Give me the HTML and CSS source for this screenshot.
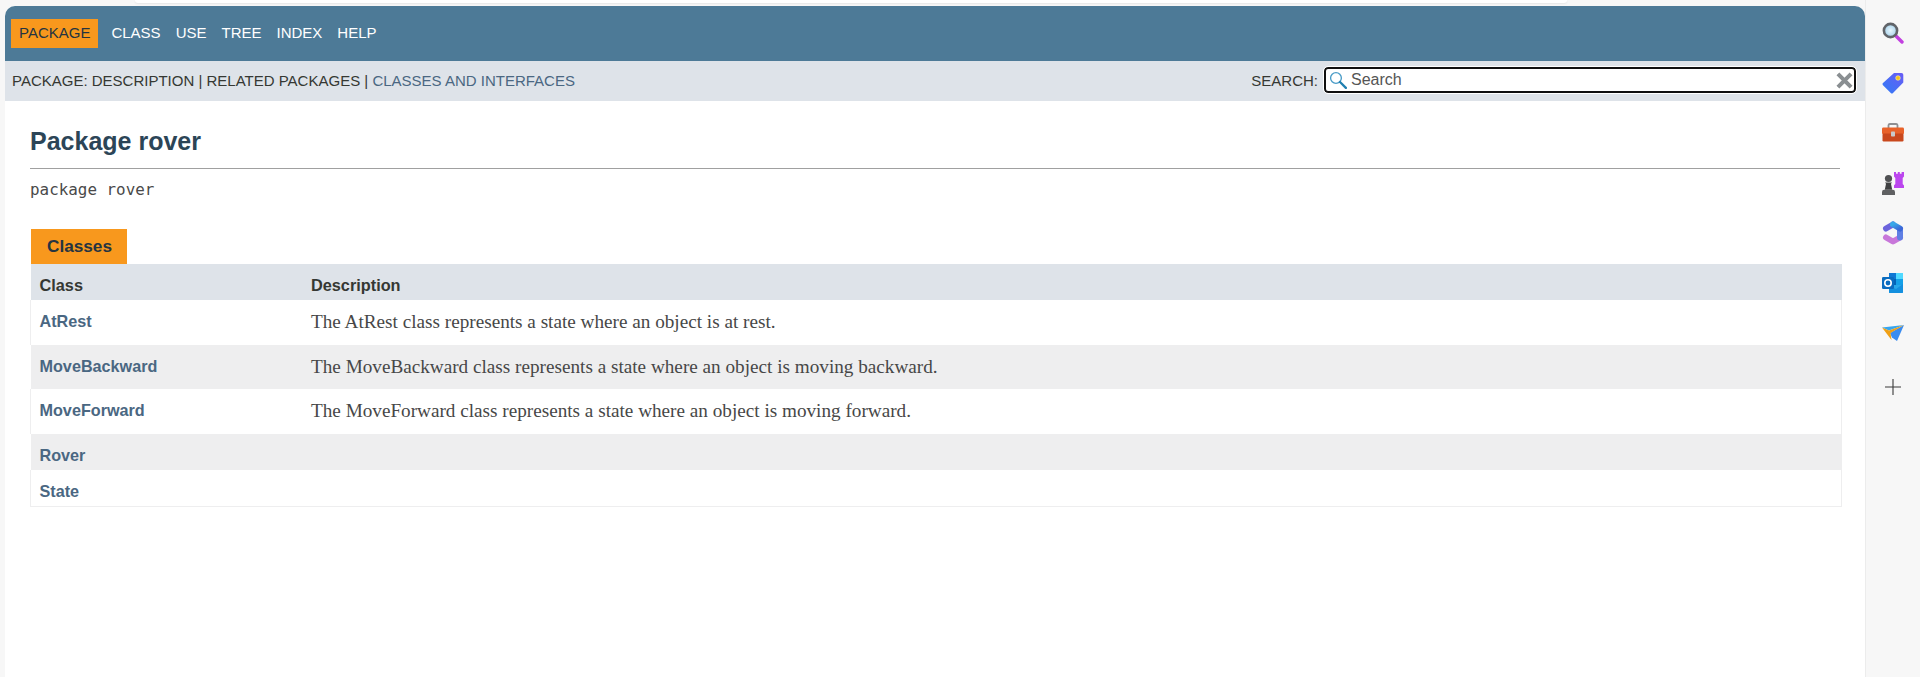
FILE: index.html
```html
<!DOCTYPE html>
<html lang="en">
<head>
<meta charset="utf-8">
<title>rover</title>
<link rel="stylesheet" href="styles.css">
</head>
<body>
<div class="topsliver"></div>
<div class="shell">
  <main class="panel">
    <header>
      <nav class="topnav">
        <a class="tab active">PACKAGE</a>
        <a class="tab">CLASS</a>
        <a class="tab">USE</a>
        <a class="tab">TREE</a>
        <a class="tab">INDEX</a>
        <a class="tab">HELP</a>
      </nav>
      <div class="subnav">
        <div class="crumbs">PACKAGE: DESCRIPTION | RELATED PACKAGES | <a class="crumb-link">CLASSES AND INTERFACES</a></div>
        <div class="search">
          <label class="search-label">SEARCH:</label>
          <div class="search-box">
            <svg class="glass" viewBox="0 0 16 16" width="18" height="18"><circle cx="6.200" cy="6.200" r="4.800" fill="none" stroke="#4a9cc7" stroke-width="1.200"/><path d="M9.800 9.800L15 15" stroke="#1f7fb0" stroke-width="2" stroke-linecap="round"/></svg>
            <span class="search-text">Search</span>
            <svg class="clear" viewBox="0 0 16 16" width="17" height="17"><path d="M1.800 1.800L14.200 14.200M14.200 1.800L1.800 14.200" stroke="#8a8f92" stroke-width="3.800"/></svg>
          </div>
        </div>
      </div>
    </header>
    <section class="content">
      <h1 class="title">Package rover</h1>
      <hr class="rule">
      <div class="sig">package rover</div>
      <div class="caption">Classes</div>
      <div class="table">
        <div class="row head"><div class="c1">Class</div><div class="c2">Description</div></div>
        <div class="row tall white"><a class="c1 link">AtRest</a><div class="c2 desc">The AtRest class represents a state where an object is at rest.</div></div>
        <div class="row tall grey"><a class="c1 link">MoveBackward</a><div class="c2 desc">The MoveBackward class represents a state where an object is moving backward.</div></div>
        <div class="row tall white"><a class="c1 link">MoveForward</a><div class="c2 desc">The MoveForward class represents a state where an object is moving forward.</div></div>
        <div class="row short grey"><a class="c1 link">Rover</a><div class="c2"></div></div>
        <div class="row short white last"><a class="c1 link">State</a><div class="c2"></div></div>
      </div>
    </section>
  </main>
  <aside class="sidebar">
    <div class="slot"><svg viewBox="0 0 22 22" width="22" height="22"><defs><radialGradient id="lens"><stop offset="0" stop-color="#e6f5fc"/><stop offset="1" stop-color="#a9d3ec"/></radialGradient></defs><path d="M13.500 13.500L20 20" stroke="#c23fe0" stroke-width="3.400" stroke-linecap="round"/><circle cx="8.500" cy="8.500" r="6.600" fill="url(#lens)" stroke="#616469" stroke-width="2.600"/></svg></div>
    <div class="slot"><svg viewBox="0 0 22 22" width="22" height="22"><defs><linearGradient id="tag" x1="0" y1="1" x2="1" y2="0"><stop offset="0" stop-color="#2f7cf6"/><stop offset="1" stop-color="#6a5cf5"/></linearGradient></defs><path d="M12 1H19.500a1.800 1.800 0 0 1 1.800 1.800V10.500L11 21a1.600 1.600 0 0 1-2.200 0L1 13.200a1.600 1.600 0 0 1 0-2.200z" fill="url(#tag)"/><circle cx="16" cy="6" r="2.300" fill="#f3c21b" stroke="#fff3b0" stroke-width=".6"/></svg></div>
    <div class="slot"><svg viewBox="0 0 24 22" width="24" height="22"><path d="M7.500 6V3.200A1.400 1.400 0 0 1 8.900 2h6.200A1.400 1.400 0 0 1 16.500 3.200V6" fill="none" stroke="#8e8f92" stroke-width="1.800"/><rect x="1" y="5.500" width="22" height="7" rx="1.400" fill="#e8622a"/><rect x="1.500" y="11.500" width="21" height="8" rx="1.200" fill="#c9481d"/><rect x="10" y="9.500" width="4" height="5" rx=".8" fill="#c9c9c9"/></svg></div>
    <div class="slot"><svg viewBox="0 0 24 24" width="24" height="24"><path d="M13 1h2v1.800h1.800V1h2v1.800h1.800V1H23v4.500l-1.300 1.500v6l1.300 1.500V17H13v-2.700L14.300 13V7L13 5.500z" fill="#bb46ee"/><circle cx="7.500" cy="7.500" r="3.600" fill="#505153"/><path d="M4 11.500h7l-1 1.300 1.200 6H3.800l1.200-6z" fill="#3f4042"/><path d="M1 21a2.200 2.200 0 0 1 2.200-2.200h8.600A2.200 2.200 0 0 1 14 21v3H1z" fill="#5f6062"/></svg></div>
    <div class="slot"><svg viewBox="0 0 22 24" width="22" height="24"><defs><linearGradient id="m1" x1="0" y1="0" x2="0" y2="1"><stop offset="0" stop-color="#7e5ce0"/><stop offset="1" stop-color="#a25ed8"/></linearGradient><linearGradient id="m2" x1="0" y1="0" x2="1" y2="1"><stop offset="0" stop-color="#38a8e8"/><stop offset="1" stop-color="#3c68d8"/></linearGradient></defs><path d="M4 7.500L11 3.500" fill="none" stroke="#6b63dc" stroke-width="6" stroke-linecap="round"/><path d="M4 7.500V16.500" fill="none" stroke="url(#m1)" stroke-width="6" stroke-linecap="round"/><path d="M4 16.500L11 20.500 18 16.500" fill="none" stroke="#c877da" stroke-width="6" stroke-linecap="round" stroke-linejoin="round"/><path d="M18 16.500V9" fill="none" stroke="#5f7fe4" stroke-width="6" stroke-linecap="round"/><path d="M11 3.500L18 7.500" fill="none" stroke="url(#m2)" stroke-width="6" stroke-linecap="round"/></svg></div>
    <div class="slot"><svg viewBox="0 0 22 22" width="22" height="22"><path d="M7 1h13a1 1 0 0 1 1 1v18a1 1 0 0 1-1 1H7z" fill="#28a8ea"/><path d="M7 1h7v6H7z" fill="#0f78d4"/><path d="M14 1h7v6h-7z" fill="#50d9ff"/><path d="M7 7h7v6H7z" fill="#0364b8"/><path d="M14 7h7v6h-7z" fill="#14a0e8"/><path d="M7 14l7 3 7-5v8a1 1 0 0 1-1 1H8a1 1 0 0 1-1-1z" fill="#1490df"/><rect x="0" y="5" width="12" height="12" rx="1.300" fill="#0a6cc0"/><circle cx="6" cy="11" r="3.200" fill="none" stroke="#fff" stroke-width="1.600"/></svg></div>
    <div class="slot"><svg viewBox="0 0 24 18" width="24" height="18"><path d="M9 9L23 1 16 17 11 13.500z" fill="#3a8cf0"/><path d="M1 3.500L23 1 8 6.500z" fill="#38a6ee"/><path d="M1 3.500L8 6.500 23 1 9.500 9 10.500 16z" fill="#f0a015"/></svg></div>
    <div class="slot plus-slot"><svg viewBox="0 0 16 16" width="16" height="16"><path d="M8 0V16M0 8H16" stroke="#3b3b3b" stroke-width="1.100"/></svg></div>
  </aside>
</div>
</body>
</html>
```
FILE: styles.css
```css
* { box-sizing: border-box; }
html, body { margin: 0; height: 677px; overflow: hidden; }
body {
  background: #f7f7f7;
  font-family: "Liberation Sans", Arial, sans-serif;
  color: #353833;
  position: relative;
}
.topsliver {
  position: absolute;
  left: 135px;
  top: 0;
  width: 1432px;
  height: 3px;
  background: #fff;
  border-radius: 0 0 4px 4px;
  box-shadow: 0 1px 2px #e6e6e6;
}
.shell { display: flex; height: 677px; padding: 6px 0 0 5px; }
.panel {
  width: 1860px;
  background: #fff;
  border-top-left-radius: 10px;
  border-top-right-radius: 10px;
  overflow: hidden;
}
.topnav {
  height: 55px;
  background: #4d7a97;
  display: flex;
  align-items: flex-start;
  padding: 13px 0 0 6px;
  color: #fff;
}
.tab { font-size: 15px; line-height: 28px; margin-right: 15px; }
.tab.active { background: #f8981d; color: #253441; padding: 0 8px; margin-right: 13px; height: 29px; }
.subnav {
  height: 40px;
  background: #dee3e9;
  display: flex;
  justify-content: space-between;
  align-items: flex-start;
  padding: 0 9px 0 7px;
  font-size: 15px;
}
.crumbs { line-height: 40px; color: #353833; }
.crumb-link { color: #4a6782; }
.search { display: flex; align-items: center; margin-top: 6px; gap: 6px; }
.search-label { font-size: 15px; }
.search-box {
  width: 532px;
  height: 26px;
  background: #fff;
  border: 2px solid #101010;
  border-radius: 4px;
  outline: 1px solid #fff;
  display: flex;
  align-items: center;
  padding: 0 1px 0 3px;
}
.search-text { font-size: 16px; color: #555; margin-left: 4px; flex: 1; }
.content { padding: 0 25px 0 25px; }
.title { font-size: 25px; line-height: 30px; margin: 0; padding-top: 25px; color: #2c4557; font-weight: bold; }
.rule { height: 1px; border: 0; background: #a0a0a0; margin: 12px 0 0 0; }
.sig { font-family: "DejaVu Sans Mono", monospace; font-size: 15.900px; line-height: 20px; margin-top: 11px; color: #4a4a4a; }
.caption {
  width: 96px;
  height: 35px;
  margin: 29px 0 0 1px;
  background: #f8981d;
  color: #253441;
  font-weight: bold;
  font-size: 17.200px;
  line-height: 35px;
  padding-left: 16px;
}
.table { width: 1812px; margin-left: 0; }
.row { display: flex; }
.head { height: 36px; background: #dee3e9; font-weight: bold; font-size: 16.300px; line-height: 43px; margin-left: 1px; }
.tall { height: 45px; }
.short { height: 36px; }
.row.tall:nth-child(3) { height: 44px; }
.white { background: #fff; border-left: 1px solid #eeeeef; border-right: 1px solid #eeeeef; }
.grey { background: #eeeeef; margin-left: 1px; }
.last { border-bottom: 1px solid #eeeeef; height: 37px; }
.c1 { width: 280px; padding-left: 8.500px; flex: none; }
.c2 { flex: 1; }
.link { color: #4a6782; font-weight: bold; font-size: 16.200px; line-height: 42px; }
.desc { font-family: "Liberation Serif", Georgia, serif; font-size: 19.200px; line-height: 44px; color: #474747; }
.sidebar {
  width: 55px;
  margin-top: -6px;
  display: flex;
  flex-direction: column;
  padding-top: 8px;
  border-left: 1px solid #ececec;
}
.slot { height: 50px; display: flex; align-items: center; justify-content: center; }
.plus-slot { margin-top: 4px; }
```
